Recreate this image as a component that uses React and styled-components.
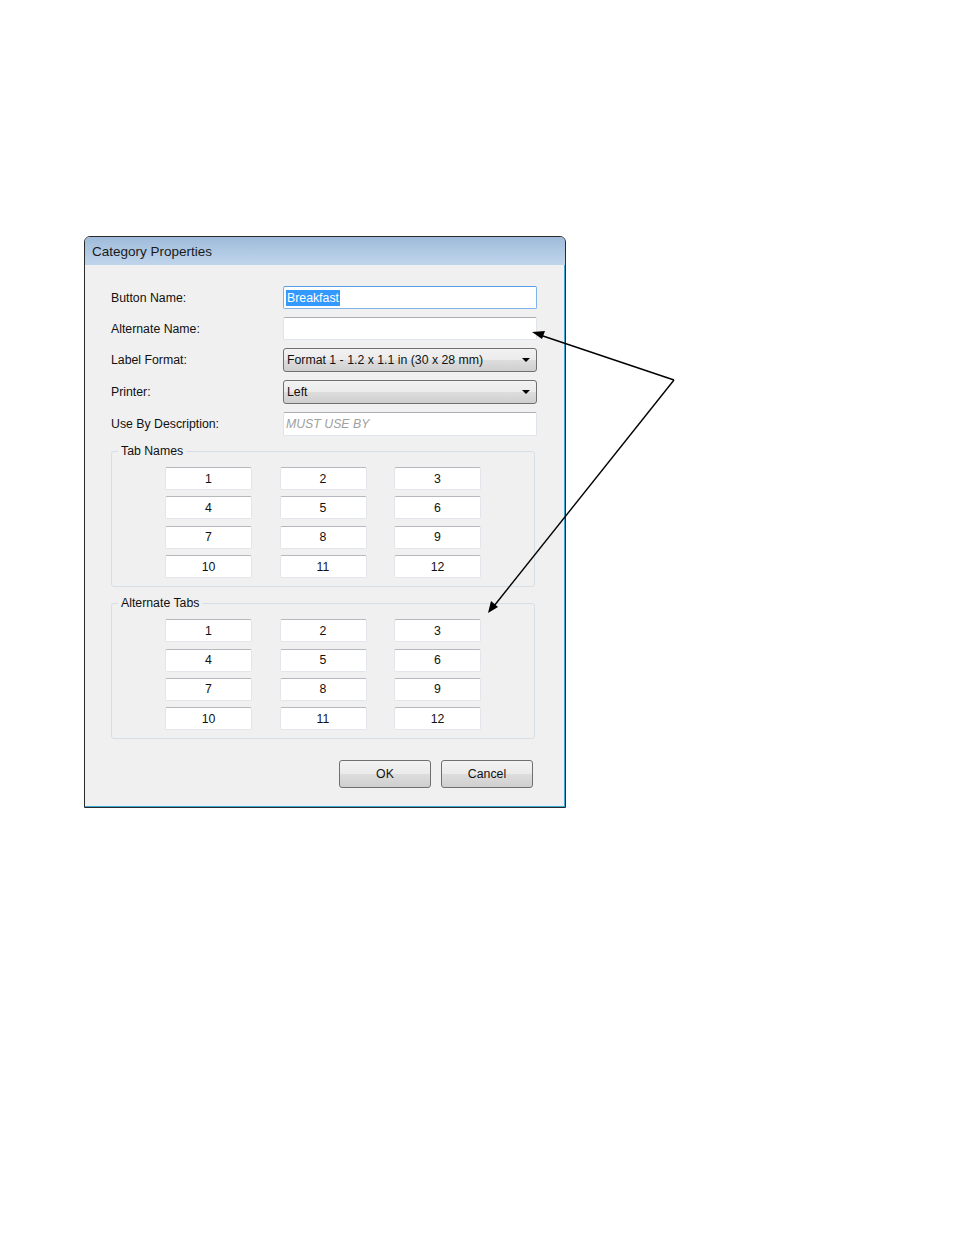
import React from 'react'
import styled, { createGlobalStyle } from 'styled-components'

const GlobalStyle = createGlobalStyle`
  html, body { margin: 0; padding: 0; background: #fff; }
  body { font-family: "Liberation Sans", Arial, sans-serif; }
`

const Page = styled.div`
  position: relative;
  width: 954px;
  height: 1235px;
  padding: 236px 0 0 84px;
  box-sizing: border-box;
`

const Dialog = styled.div`
  width: 482px;
  box-sizing: border-box;
  border: 1px solid #2a2a2a;
  border-radius: 6px 6px 0 0;
  background: #f0f0f0;
  box-shadow: inset -1px -1px 0 #3fa9d6;
  overflow: hidden;
`

const TitleBar = styled.div`
  height: 28px;
  display: flex;
  align-items: center;
  padding-left: 7px;
  background: linear-gradient(#9fbbda, #bfd5ec);
  font-size: 13.5px;
  color: #1a1a1a;
`

const Body = styled.div`
  padding: 21px 28px 19px 26px;
`

const Form = styled.div`
  display: grid;
  grid-template-columns: 172px 254px;
  grid-template-rows: 23px 23px 24px 24px 24px;
  row-gap: 8px;
  align-items: center;
  font-size: 12.3px;
  color: #111;
`

const Label = styled.div``

const TextBox = styled.div`
  height: 100%;
  box-sizing: border-box;
  background: #fff;
  border: 1px solid #dfe4ea;
  border-top-color: #abadb3;
  border-radius: 2px;
  display: flex;
  align-items: center;
  padding-left: 2px;
  font-style: ${p => (p.$hint ? 'italic' : 'normal')};
  color: ${p => (p.$hint ? '#a0a0a0' : '#111')};
  ${p => p.$focus && 'border-color: #7eb4ea; border-top-color: #569de5;'}
`

const Selected = styled.span`
  background: #3399ff;
  color: #fff;
  padding: 1px 1px;
`

const Combo = styled.div`
  height: 100%;
  box-sizing: border-box;
  border: 1px solid #707070;
  border-radius: 3px;
  background: linear-gradient(#f2f2f2 0%, #ebebeb 50%, #dddddd 51%, #cfcfcf 100%);
  display: flex;
  align-items: center;
  justify-content: space-between;
  padding: 0 6px 0 3px;
`

const Caret = styled.span`
  width: 0;
  height: 0;
  border-left: 4px solid transparent;
  border-right: 4px solid transparent;
  border-top: 4px solid #000;
`

const Group = styled.fieldset`
  margin: ${p => p.$top}px 0 0 0;
  padding: 9px 0 8px 0;
  border: 1px solid #d5dfe5;
  border-radius: 3px;
  box-sizing: border-box;
  width: 424px;
`

const Legend = styled.legend`
  font-size: 12.3px;
  color: #111;
  padding: 0 3px;
  margin-left: 6px;
`

const TabGrid = styled.div`
  display: grid;
  grid-template-columns: repeat(3, 87px);
  grid-auto-rows: 23px;
  column-gap: 27.5px;
  row-gap: 6.4px;
  margin-left: 53px;
`

const TabBox = styled.div`
  background: #fff;
  border: 1px solid #e2e6ea;
  border-top-color: #b5b8bd;
  border-radius: 2px;
  display: flex;
  align-items: center;
  justify-content: center;
  font-size: 12.3px;
  color: #111;
`

const Footer = styled.div`
  display: flex;
  justify-content: flex-end;
  gap: 10px;
  margin-top: 21px;
  padding-right: 4px;
`

const Button = styled.div`
  width: 92px;
  height: 28px;
  box-sizing: border-box;
  border: 1px solid #707070;
  border-radius: 3px;
  background: linear-gradient(#f2f2f2 0%, #ebebeb 50%, #dddddd 51%, #cfcfcf 100%);
  display: flex;
  align-items: center;
  justify-content: center;
  font-size: 12.3px;
  color: #111;
`

const Arrows = styled.svg`
  position: absolute;
  left: 0;
  top: 0;
  pointer-events: none;
`

const tabs = Array.from({ length: 12 }, (_, i) => i + 1)

function TabGroup({ title, top }) {
  return (
    <Group $top={top}>
      <Legend>{title}</Legend>
      <TabGrid>
        {tabs.map(n => (
          <TabBox key={n}>{n}</TabBox>
        ))}
      </TabGrid>
    </Group>
  )
}

export default function App() {
  return (
    <Page>
      <GlobalStyle />
      <Dialog>
        <TitleBar>Category Properties</TitleBar>
        <Body>
          <Form>
            <Label>Button Name:</Label>
            <TextBox $focus>
              <Selected>Breakfast</Selected>
            </TextBox>
            <Label>Alternate Name:</Label>
            <TextBox />
            <Label>Label Format:</Label>
            <Combo>
              <span>Format 1 - 1.2 x 1.1 in (30 x 28 mm)</span>
              <Caret />
            </Combo>
            <Label>Printer:</Label>
            <Combo>
              <span>Left</span>
              <Caret />
            </Combo>
            <Label>Use By Description:</Label>
            <TextBox $hint>MUST USE BY</TextBox>
          </Form>
          <TabGroup title="Tab Names" top={8} />
          <TabGroup title="Alternate Tabs" top={9} />
          <Footer>
            <Button>OK</Button>
            <Button>Cancel</Button>
          </Footer>
        </Body>
      </Dialog>
      <Arrows width="954" height="1235" viewBox="0 0 954 1235">
        <line x1="674" y1="380" x2="540" y2="335" stroke="#000" strokeWidth="1.4" />
        <polygon points="532,332 545,331 542,339" fill="#000" />
        <line x1="674" y1="380" x2="494" y2="606" stroke="#000" strokeWidth="1.4" />
        <polygon points="488,613 491,601 498,607" fill="#000" />
      </Arrows>
    </Page>
  )
}
